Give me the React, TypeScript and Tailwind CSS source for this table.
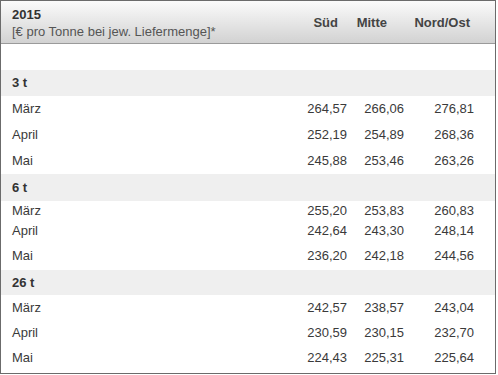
type Row = {
  label: string;
  values: [string, string, string];
  h: string;
};

type Group = {
  title: string;
  h: string;
  rows: Row[];
};

const groups: Group[] = [
  {
    title: "3 t",
    h: "h-[26px]",
    rows: [
      { label: "März", values: ["264,57", "266,06", "276,81"], h: "h-[26px]" },
      { label: "April", values: ["252,19", "254,89", "268,36"], h: "h-[26px]" },
      { label: "Mai", values: ["245,88", "253,46", "263,26"], h: "h-[26px]" },
    ],
  },
  {
    title: "6 t",
    h: "h-[27px]",
    rows: [
      { label: "März", values: ["255,20", "253,83", "260,83"], h: "h-[19px]" },
      { label: "April", values: ["242,64", "243,30", "248,14"], h: "h-[22px]" },
      { label: "Mai", values: ["236,20", "242,18", "244,56"], h: "h-[28px]" },
    ],
  },
  {
    title: "26 t",
    h: "h-[25px]",
    rows: [
      { label: "März", values: ["242,57", "238,57", "243,04"], h: "h-[25px]" },
      { label: "April", values: ["230,59", "230,15", "232,70"], h: "h-[25px]" },
      { label: "Mai", values: ["224,43", "225,31", "225,64"], h: "h-[26px]" },
    ],
  },
];

function Values({ values }: { values: [string, string, string] }) {
  return (
    <>
      <div className="w-[60px] text-right">{values[0]}</div>
      <div className="w-[57px] text-right">{values[1]}</div>
      <div className="w-[70px] text-right">{values[2]}</div>
    </>
  );
}

export default function App() {
  return (
    <div className="w-[498px] h-[375px] bg-white font-['Liberation_Sans',Arial,sans-serif] text-[13px] text-[#3a3a3a]">
      <div className="w-[496px] h-[374px] border border-[#6b6b6b] overflow-hidden">
        {/* header */}
        <div className="h-[43px] flex border-b border-[#9a9a9a] bg-gradient-to-b from-[#fbfbfb] to-[#d2d2d2]">
          <div className="flex-1 pl-[11px] pt-[5px] leading-[17px]">
            <div className="font-bold text-[#333]">2015</div>
            <div className="text-[#555]">[€ pro Tonne bei jew. Liefermenge]*</div>
          </div>
          <div className="flex pt-[13px] font-bold text-[#444] leading-[17px] pr-[21px]">
            <div className="w-[60px] text-right pr-[9px]">Süd</div>
            <div className="w-[57px] text-right pr-[17px]">Mitte</div>
            <div className="w-[70px] text-right pr-[4px]">Nord/Ost</div>
          </div>
        </div>

        <div className="h-[26px]" />

        {groups.map((g) => (
          <div key={g.title}>
            <div className={`${g.h} flex items-center bg-[#efefef] pl-[11px] font-bold text-[#333]`}>
              {g.title}
            </div>
            {g.rows.map((r) => (
              <div key={r.label} className={`${r.h} flex items-center`}>
                <div className="flex-1 pl-[11px]">{r.label}</div>
                <div className="flex pr-[21px]">
                  <Values values={r.values} />
                </div>
              </div>
            ))}
          </div>
        ))}
      </div>
    </div>
  );
}
